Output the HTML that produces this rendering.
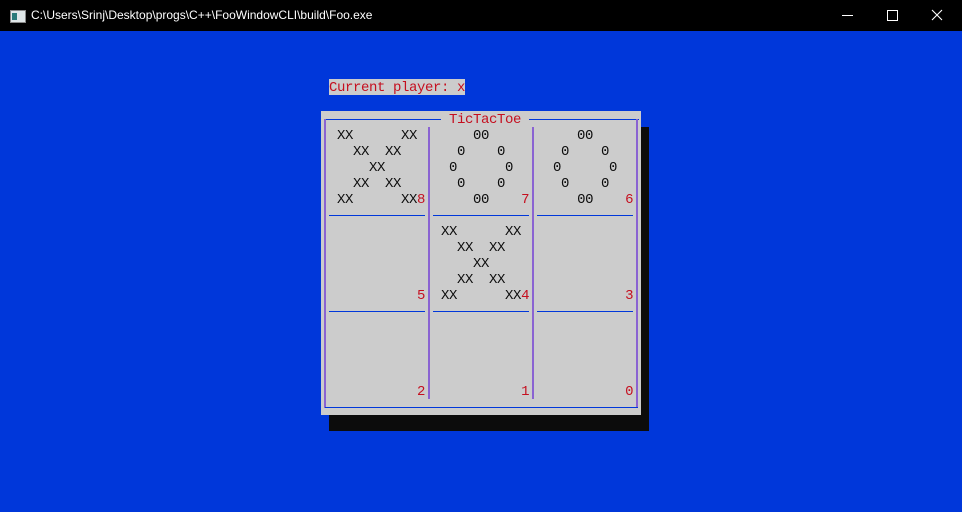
<!DOCTYPE html>
<html><head><meta charset="utf-8"><style>
body{margin:0;width:962px;height:512px;background:#0037da;position:relative;overflow:hidden;font-family:"Liberation Mono",monospace}
.tb{position:absolute;left:0;top:0;width:962px;height:31px;background:#000;color:#fff;font:12px "Liberation Sans",sans-serif}
.a{position:absolute}
pre{margin:0;font:14px/16px "Liberation Mono",monospace;letter-spacing:-0.4px;position:absolute;white-space:pre}
.r{color:#c50f1f}
.v{position:absolute;width:2px;background:#8a63d2}
.h{position:absolute;height:1px;background:#0037da}
</style></head><body>
<div class="tb">
 <div class="a" style="left:10px;top:10px;width:14px;height:11px;background:#dfe6e8;border:1px solid #888"><div style="position:absolute;left:1px;top:2px;width:5px;height:7px;background:#2a7a7a"></div></div>
 <div class="a" style="left:31px;top:8px">C:\Users\Srinj\Desktop\progs\C++\FooWindowCLI\build\Foo.exe</div>
 <div class="a" style="left:842px;top:15px;width:11px;height:1px;background:#fff"></div>
 <div class="a" style="left:887px;top:10px;width:9px;height:9px;border:1px solid #fff"></div>
 <svg class="a" style="left:931px;top:9px" width="12" height="12"><path d="M1 1L11 11M11 1L1 11" stroke="#fff" stroke-width="1.1"/></svg>
</div>
<div class="a" style="left:329px;top:79px;width:136px;height:16px;background:#cccccc"></div>
<pre style="left:329px;top:80px;color:#c50f1f">Current player: x</pre>
<div class="a" style="left:329px;top:127px;width:320px;height:304px;background:#0c0c0c"></div>
<div class="a" style="left:321px;top:111px;width:320px;height:304px;background:#cccccc"></div>
<div class="h" style="left:325px;top:119px;width:116px"></div>
<div class="h" style="left:529px;top:119px;width:110px"></div>
<pre class="r" style="left:449px;top:112px">TicTacToe</pre>
<div class="v" style="left:324px;top:119px;height:289px"></div>
<div class="v" style="left:636px;top:119px;height:289px"></div>
<div class="h" style="left:325px;top:407px;width:313px"></div>
<div class="v" style="left:428px;top:127px;height:272px"></div>
<div class="v" style="left:532px;top:127px;height:272px"></div>
<div class="h" style="left:329px;top:215px;width:96px"></div>
<div class="h" style="left:433px;top:215px;width:96px"></div>
<div class="h" style="left:537px;top:215px;width:96px"></div>
<div class="h" style="left:329px;top:311px;width:96px"></div>
<div class="h" style="left:433px;top:311px;width:96px"></div>
<div class="h" style="left:537px;top:311px;width:96px"></div>
<pre style="left:329px;top:128px;color:#0c0c0c"> XX      XX       00           00     
   XX  XX       0    0       0    0   
     XX        0      0     0      0  
   XX  XX       0    0       0    0   
 XX      XX<span class="r">8</span>      00    <span class="r">7</span>      00    <span class="r">6</span>

              XX      XX              
                XX  XX                
                  XX                  
                XX  XX                
           <span class="r">5</span>  XX      XX<span class="r">4</span>            <span class="r">3</span>





           <span class="r">2</span>            <span class="r">1</span>            <span class="r">0</span></pre>
</body></html>
